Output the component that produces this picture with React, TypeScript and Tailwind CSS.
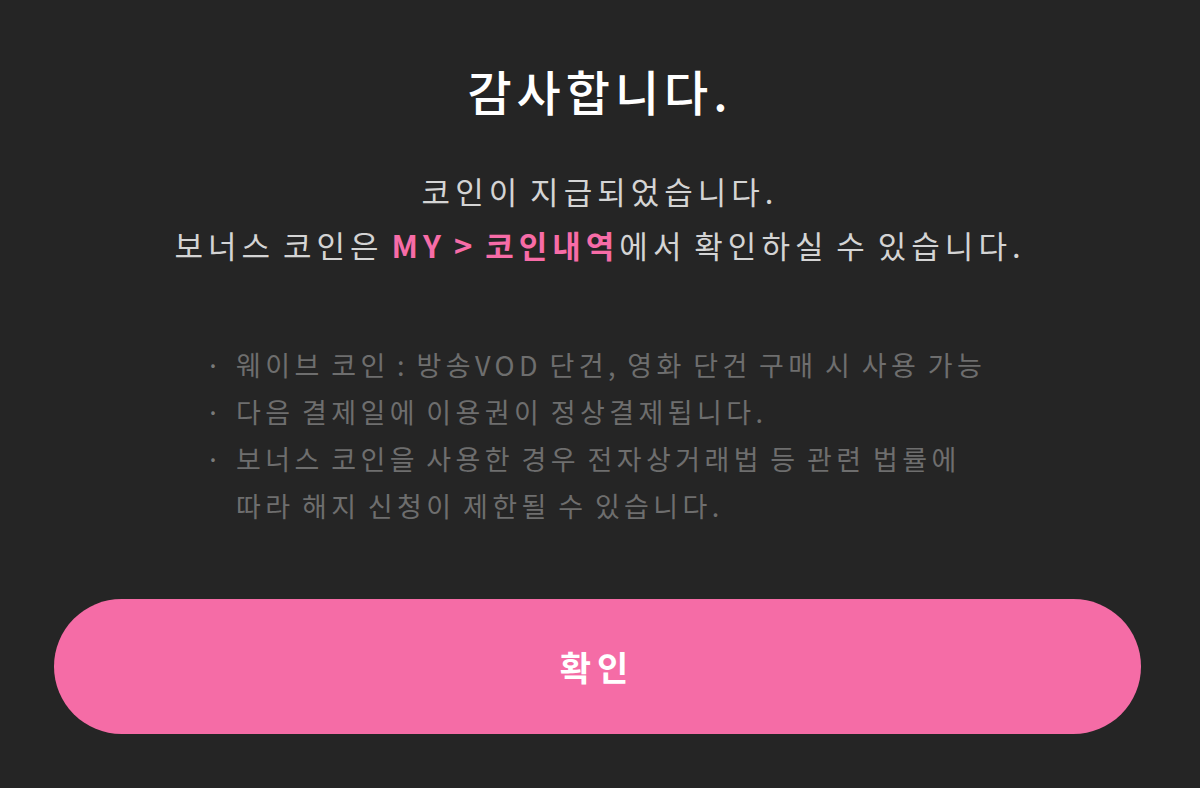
export default function App() {
  const notes = [
    '웨이브 코인 : 방송VOD 단건, 영화 단건 구매 시 사용 가능',
    '다음 결제일에 이용권이 정상결제됩니다.',
    '보너스 코인을 사용한 경우 전자상거래법 등 관련 법률에\n따라 해지 신청이 제한될 수 있습니다.',
  ];

  return (
    <div
      className="w-[1200px] h-[788px] bg-[#252525] flex flex-col items-center overflow-hidden"
      style={{ fontFamily: '"Noto Sans CJK KR", "Noto Sans", sans-serif' }}
    >
      <h1 className="mt-[54px] text-[48px] leading-[72px] font-medium text-white tracking-[5px] [word-spacing:-4px]">
        감사합니다.
      </h1>

      <div className="mt-[38px] text-center text-[#d4d4d4] text-[31px] leading-[54px] tracking-[5px] [word-spacing:-4px]">
        <p>코인이 지급되었습니다.</p>
        <p>
          보너스 코인은 <span className="font-bold text-[#f76ca7]">MY &gt; 코인내역</span>에서 확인하실 수 있습니다.
        </p>
      </div>

      <ul className="mt-[69px] w-[800px] text-[#6e6e6e] text-[27px] leading-[47px] tracking-[4.4px] [word-spacing:-3px]">
        {notes.map((n) => (
          <li key={n} className="flex">
            <span className="w-[36px] shrink-0 pr-[10px] text-center tracking-normal text-[#7a7a7a]">·</span>
            <span className="whitespace-pre">{n}</span>
          </li>
        ))}
      </ul>

      <button className="mt-[70px] mr-[6px] w-[1087px] h-[135px] rounded-full bg-[#f56ca6] text-white text-[34px] font-bold tracking-[6px]">
        확인
      </button>
    </div>
  );
}
